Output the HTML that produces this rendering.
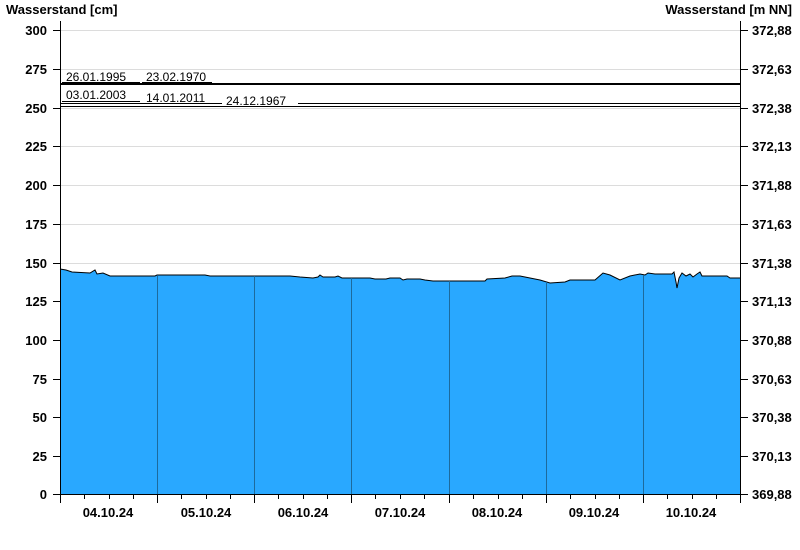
<!DOCTYPE html>
<html><head><meta charset="utf-8"><style>
html,body{margin:0;padding:0;background:#fff;}
svg{display:block;font-family:"Liberation Sans",Arial,sans-serif;}
.b{font-weight:bold;font-size:13px;fill:#000;}
.s{font-size:12px;fill:#000;}
</style></head><body>
<svg width="800" height="550" viewBox="0 0 800 550">
<text x="6" y="14" class="b">Wasserstand [cm]</text>
<text x="792" y="14" class="b" text-anchor="end">Wasserstand [m NN]</text>
<g stroke="#dcdcdc" stroke-width="1">
<line x1="60" x2="740" y1="30.5" y2="30.5"/><line x1="60" x2="740" y1="69.5" y2="69.5"/>
<line x1="60" x2="740" y1="108.5" y2="108.5"/><line x1="60" x2="740" y1="146.5" y2="146.5"/>
<line x1="60" x2="740" y1="185.5" y2="185.5"/><line x1="60" x2="740" y1="224.5" y2="224.5"/>
<line x1="60" x2="740" y1="263.5" y2="263.5"/>
</g>
<polygon fill="#29a8ff" stroke="none" points="60,495 60,269 66,270 72,272 90,273 95,270 97,274 103,273 110,276 155,276 157,275 205,275 210,276 290,276 300,277 313,278 318,277 320,275 323,277 335,277 338,276 342,278 370,278 375,279 386,279 390,278 400,278 403,280 407,279 420,279 425,280 433,281 485,281 487,279 505,278 512,276 520,276 525,277 535,279 540,280 550,283 565,282 570,280 595,280 603,273 610,275 620,280 630,276 640,274 645,275 648,273 655,274 672,274 674,272 676,282 677,288 679,278 682,273 686,276 690,274 693,277 697,274 700,272 702,276 727,276 730,278 740,278 740,495"/>
<polyline fill="none" stroke="#000" stroke-width="1" points="60,269 66,270 72,272 90,273 95,270 97,274 103,273 110,276 155,276 157,275 205,275 210,276 290,276 300,277 313,278 318,277 320,275 323,277 335,277 338,276 342,278 370,278 375,279 386,279 390,278 400,278 403,280 407,279 420,279 425,280 433,281 485,281 487,279 505,278 512,276 520,276 525,277 535,279 540,280 550,283 565,282 570,280 595,280 603,273 610,275 620,280 630,276 640,274 645,275 648,273 655,274 672,274 674,272 676,282 677,288 679,278 682,273 686,276 690,274 693,277 697,274 700,272 702,276 727,276 730,278 740,278"/>
<g stroke="#1d6a9c" stroke-width="1">
<line x1="157.5" x2="157.5" y1="276" y2="495"/><line x1="254.5" x2="254.5" y1="276" y2="495"/>
<line x1="351.5" x2="351.5" y1="278" y2="495"/><line x1="449.5" x2="449.5" y1="281" y2="495"/>
<line x1="546.5" x2="546.5" y1="282" y2="495"/><line x1="643.5" x2="643.5" y1="275" y2="495"/>
</g>
<g stroke="#000">
<line x1="60" x2="740" y1="84" y2="84" stroke-width="2"/>
<line x1="62" x2="140" y1="101.5" y2="101.5" stroke-width="1"/>
<line x1="60" x2="740" y1="103.5" y2="103.5" stroke-width="1"/>
<line x1="60" x2="740" y1="106.5" y2="106.5" stroke-width="1"/>
</g>
<rect x="62" y="70" width="78" height="13" fill="#fff"/>
<rect x="142" y="70" width="72" height="13" fill="#fff"/>
<rect x="62" y="88" width="78" height="12.5" fill="#fff"/>
<rect x="142" y="90" width="70" height="13" fill="#fff"/>
<rect x="222" y="93" width="76" height="13" fill="#fff"/>
<line x1="62" x2="140" y1="82.5" y2="82.5" stroke="#000"/>
<line x1="142" x2="212" y1="82.5" y2="82.5" stroke="#000"/>
<text x="66" y="81" class="s">26.01.1995</text>
<text x="146" y="81" class="s">23.02.1970</text>
<text x="66" y="99" class="s">03.01.2003</text>
<text x="146" y="102" class="s">14.01.2011</text>
<text x="226" y="105" class="s">24.12.1967</text>
<g stroke="#000" stroke-width="1">
<line x1="60.5" x2="60.5" y1="21" y2="495"/>
<line x1="740.5" x2="740.5" y1="21" y2="495"/>
<line x1="60" x2="741" y1="494.5" y2="494.5"/>
</g>
<g stroke="#000" id="lt">
<line x1="53" x2="60" y1="30.5" y2="30.5"/><line x1="53" x2="60" y1="69.5" y2="69.5"/>
<line x1="53" x2="60" y1="108.5" y2="108.5"/><line x1="53" x2="60" y1="146.5" y2="146.5"/>
<line x1="53" x2="60" y1="185.5" y2="185.5"/><line x1="53" x2="60" y1="224.5" y2="224.5"/>
<line x1="53" x2="60" y1="263.5" y2="263.5"/><line x1="53" x2="60" y1="301.5" y2="301.5"/>
<line x1="53" x2="60" y1="340.5" y2="340.5"/><line x1="53" x2="60" y1="379.5" y2="379.5"/>
<line x1="53" x2="60" y1="417.5" y2="417.5"/><line x1="53" x2="60" y1="456.5" y2="456.5"/>
<line x1="53" x2="60" y1="494.5" y2="494.5"/>
</g>
<use href="#lt" transform="translate(688,0)"/>
<g class="b" text-anchor="end">
<text x="47" y="35">300</text><text x="47" y="74">275</text><text x="47" y="113">250</text>
<text x="47" y="151">225</text><text x="47" y="190">200</text><text x="47" y="229">175</text>
<text x="47" y="268">150</text><text x="47" y="306">125</text><text x="47" y="345">100</text>
<text x="47" y="384">75</text><text x="47" y="422">50</text><text x="47" y="461">25</text>
<text x="47" y="499">0</text>
</g>
<g class="b">
<text x="752" y="35">372,88</text><text x="752" y="74">372,63</text><text x="752" y="113">372,38</text>
<text x="752" y="151">372,13</text><text x="752" y="190">371,88</text><text x="752" y="229">371,63</text>
<text x="752" y="268">371,38</text><text x="752" y="306">371,13</text><text x="752" y="345">370,88</text>
<text x="752" y="384">370,63</text><text x="752" y="422">370,38</text><text x="752" y="461">370,13</text>
<text x="752" y="499">369,88</text>
</g>
<g stroke="#000">
<line x1="60.5" x2="60.5" y1="495" y2="503"/><line x1="157.5" x2="157.5" y1="495" y2="503"/>
<line x1="254.5" x2="254.5" y1="495" y2="503"/><line x1="351.5" x2="351.5" y1="495" y2="503"/>
<line x1="449.5" x2="449.5" y1="495" y2="503"/><line x1="546.5" x2="546.5" y1="495" y2="503"/>
<line x1="643.5" x2="643.5" y1="495" y2="503"/><line x1="740.5" x2="740.5" y1="495" y2="503"/>
<g id="mt"><line x1="84.5" x2="84.5" y1="495" y2="499"/><line x1="109.5" x2="109.5" y1="495" y2="499"/><line x1="133.5" x2="133.5" y1="495" y2="499"/></g>
<use href="#mt" transform="translate(97,0)"/><use href="#mt" transform="translate(194,0)"/>
<use href="#mt" transform="translate(291,0)"/><use href="#mt" transform="translate(389,0)"/>
<use href="#mt" transform="translate(486,0)"/><use href="#mt" transform="translate(583,0)"/>
</g>
<g class="b" text-anchor="middle">
<text x="108" y="517">04.10.24</text><text x="206" y="517">05.10.24</text>
<text x="303" y="517">06.10.24</text><text x="400" y="517">07.10.24</text>
<text x="497" y="517">08.10.24</text><text x="594" y="517">09.10.24</text>
<text x="691" y="517">10.10.24</text>
</g>
</svg>
</body></html>
